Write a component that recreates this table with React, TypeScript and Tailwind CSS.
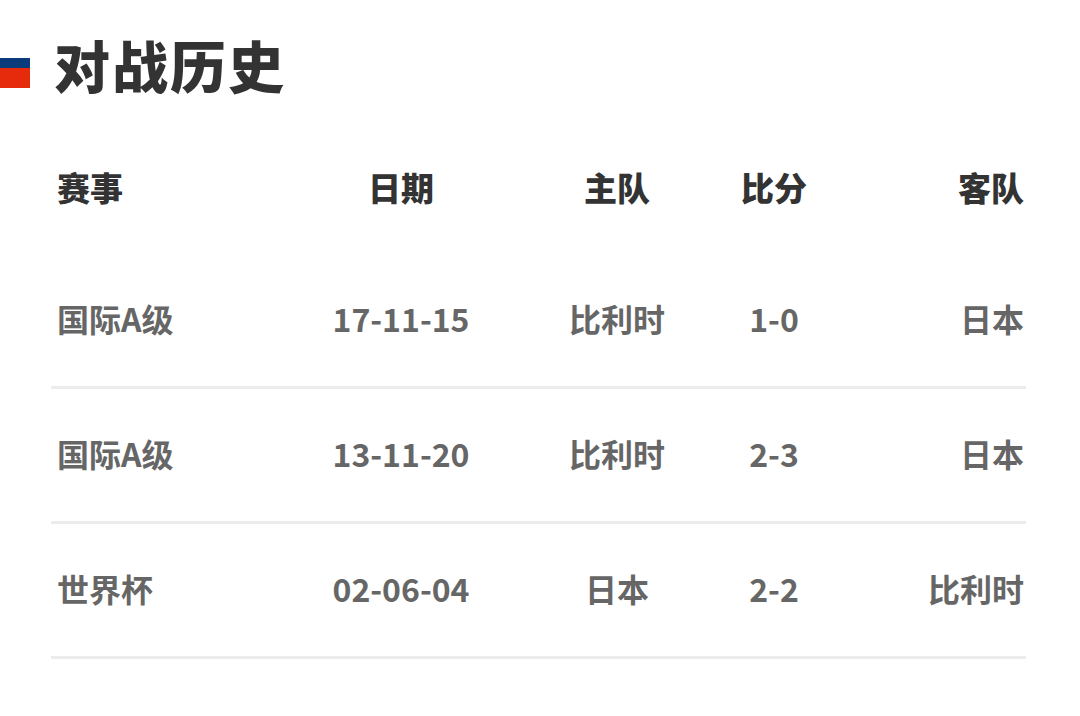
const rows = [
  { match: "国际A级", date: "17-11-15", home: "比利时", score: "1-0", away: "日本" },
  { match: "国际A级", date: "13-11-20", home: "比利时", score: "2-3", away: "日本" },
  { match: "世界杯", date: "02-06-04", home: "日本", score: "2-2", away: "比利时" },
]

const cols = "grid grid-cols-[239px_222px_210px_104px_200px] items-center"

export default function App() {
  return (
    <div
      className="w-[1080px] h-[716px] bg-white overflow-hidden"
      style={{ fontFamily: '"Noto Sans CJK SC", "Noto Sans", sans-serif' }}
    >
      <div className="flex items-start h-[127px]">
        <div className="flex flex-col w-[30px] mt-[58px]">
          <div className="h-[10px] bg-[#0c3b7c]" />
          <div className="h-[20px] bg-[#e62a0c]" />
        </div>
        <h1 className="ml-[24px] mt-[36px] text-[56px] font-black text-[#333] tracking-[2px] leading-none">对战历史</h1>
      </div>

      <div className="ml-[51px] w-[975px]">
        <div className={`${cols} h-[127px] pb-[6px] text-[33px] font-black text-[#333]`}>
          <div className="pl-[6px]">赛事</div>
          <div className="text-center">日期</div>
          <div className="text-center">主队</div>
          <div className="text-center">比分</div>
          <div className="text-right pr-[2px]">客队</div>
        </div>
        {rows.map((r, i) => (
          <div key={i} className={`${cols} h-[135px] pb-[5px] border-b-[3px] border-[#ececec] text-[32px] font-bold text-[#666]`}>
            <div className="pl-[6px]">{r.match}</div>
            <div className="text-center font-semibold">{r.date}</div>
            <div className="text-center">{r.home}</div>
            <div className="text-center font-semibold">{r.score}</div>
            <div className="text-right pr-[2px]">{r.away}</div>
          </div>
        ))}
      </div>
    </div>
  )
}
